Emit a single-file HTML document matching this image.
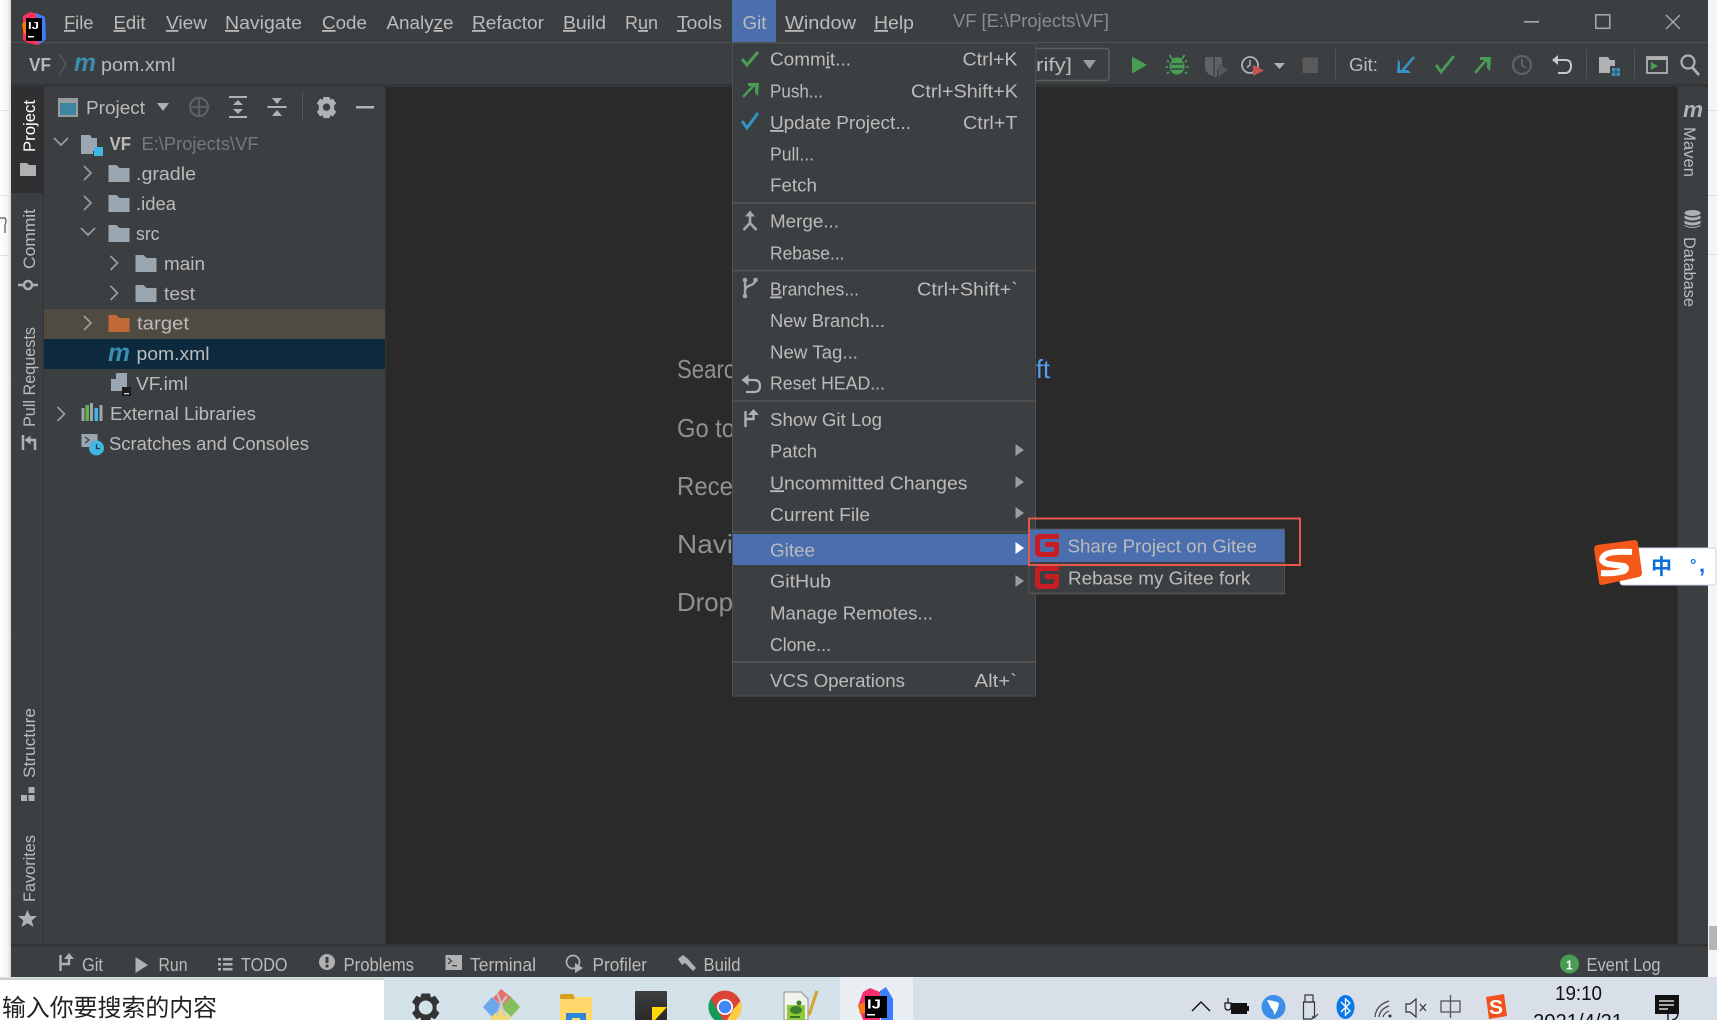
<!DOCTYPE html>
<html><head><meta charset="utf-8"><title>VF</title>
<style>
html,body{margin:0;padding:0;background:#2b2b2b;width:1717px;height:1020px;overflow:hidden}
svg{display:block;font-family:"Liberation Sans","Noto Sans CJK SC",sans-serif}
text{fill:#bbb;font-size:18px}
.m text{font-size:18px}
.r text,text.r{font-size:16.5px}
.g{fill:#afb1b3}
</style></head><body>
<svg width="1717" height="1020" viewBox="0 0 1717 1020" xmlns="http://www.w3.org/2000/svg">
<defs>
<linearGradient id="ls" x1="0" x2="1" y1="0" y2="0"><stop offset="0" stop-color="#fff"/><stop offset=".7" stop-color="#f4f4f4"/><stop offset="1" stop-color="#d8d8d8"/></linearGradient>
<linearGradient id="blk" x1="0" x2="0" y1="0" y2="1"><stop offset="0" stop-color="#3e3e3e"/><stop offset="1" stop-color="#2a2a2a"/></linearGradient>
<path id="fold" d="M0 0h8l3 3h10v14H0z"/>
<path id="chR" d="M0 0l7 7-7 7" fill="none" stroke="#9a9da0" stroke-width="1.7"/>
<path id="chD" d="M0 0l7 7 7-7" fill="none" stroke="#9a9da0" stroke-width="1.7"/>
<path id="gitee" d="M5 0h19v5H7q-2 0-2 2v9q0 2 2 2h10q2 0 2-2v-3h-9V8h14v10q0 5-5 5H5q-5 0-5-5V5q0-5 5-5z"/>
</defs>

<rect width="1717" height="1020" fill="#2a2a2a"/>
<!-- side strips -->
<rect x="0" y="0" width="11" height="980" fill="url(#ls)"/>
<rect x="0" y="110" width="10" height="1" fill="#e0e0e0"/><rect x="0" y="195" width="10" height="1" fill="#e0e0e0"/><rect x="0" y="255" width="10" height="1" fill="#e0e0e0"/>
<path d="M0 218h5q2 3 0 7v8" fill="none" stroke="#555" stroke-width="1.2"/>
<rect x="1708" y="0" width="9" height="980" fill="#f5f5f5"/>
<rect x="1708" y="110" width="9" height="1" fill="#ddd"/><rect x="1708" y="195" width="9" height="1" fill="#ddd"/><rect x="1708" y="254" width="9" height="1" fill="#ddd"/>
<rect x="1709" y="926" width="8" height="24" fill="#b5b5b5"/>

<!-- title bar -->
<rect x="11" y="0" width="1697" height="86" fill="#3c3f41"/>
<rect x="11" y="42" width="1697" height="1" fill="#515151"/>
<rect x="11" y="84" width="1697" height="3" fill="#333537"/>
<!-- IJ logo -->
<path d="M23 16l7-4 8 2 6 3 1 22-8 6-9-2-5-3z" fill="#fe315d"/><path d="M36 13l9 4 1 22-7 6z" fill="#3d7eff"/><path d="M22 24l5-4 3 16-6-2z" fill="#f97a12"/>
<rect x="26" y="18" width="16" height="23" fill="#000"/>
<text x="28" y="29" textLength="11" lengthAdjust="spacingAndGlyphs" style="font-size:10px;font-weight:bold;fill:#fff">IJ</text><rect x="28" y="36" width="6" height="1.5" fill="#fff"/>

<g style="font-size:18.5px">
<text x="64" y="29" textLength="29.5" lengthAdjust="spacingAndGlyphs"><tspan text-decoration="underline">F</tspan>ile</text>
<text x="113.500" y="29" textLength="32" lengthAdjust="spacingAndGlyphs"><tspan text-decoration="underline">E</tspan>dit</text>
<text x="166" y="29" textLength="41" lengthAdjust="spacingAndGlyphs"><tspan text-decoration="underline">V</tspan>iew</text>
<text x="225" y="29" textLength="77" lengthAdjust="spacingAndGlyphs"><tspan text-decoration="underline">N</tspan>avigate</text>
<text x="322" y="29" textLength="45" lengthAdjust="spacingAndGlyphs"><tspan text-decoration="underline">C</tspan>ode</text>
<text x="386.5" y="29" textLength="67" lengthAdjust="spacingAndGlyphs">Analy<tspan text-decoration="underline">z</tspan>e</text>
<text x="472" y="29" textLength="72" lengthAdjust="spacingAndGlyphs"><tspan text-decoration="underline">R</tspan>efactor</text>
<text x="563" y="29" textLength="43" lengthAdjust="spacingAndGlyphs"><tspan text-decoration="underline">B</tspan>uild</text>
<text x="625" y="29" textLength="33" lengthAdjust="spacingAndGlyphs">R<tspan text-decoration="underline">u</tspan>n</text>
<text x="677" y="29" textLength="45" lengthAdjust="spacingAndGlyphs"><tspan text-decoration="underline">T</tspan>ools</text>
<rect x="732" y="0" width="44" height="42" fill="#4b6eaf"/>
<text x="742.5" y="29" textLength="24" lengthAdjust="spacingAndGlyphs">Git</text>
<text x="785" y="29" textLength="71" lengthAdjust="spacingAndGlyphs"><tspan text-decoration="underline">W</tspan>indow</text>
<text x="874" y="29" textLength="40" lengthAdjust="spacingAndGlyphs"><tspan text-decoration="underline">H</tspan>elp</text>
<text x="953" y="27" textLength="156" lengthAdjust="spacingAndGlyphs" style="fill:#8a8c8e">VF [E:\Projects\VF]</text>
</g>
<rect x="1524" y="21" width="15" height="1.6" fill="#aaa"/>
<rect x="1595.8" y="14.8" width="14" height="13.5" fill="none" stroke="#aaa" stroke-width="1.5"/>
<path d="M1666 15l14 14m0-14l-14 14" stroke="#aaa" stroke-width="1.4"/>

<!-- breadcrumb -->
<text x="29" y="71" textLength="22" lengthAdjust="spacingAndGlyphs" style="font-weight:bold;fill:#b5b7b9">VF</text>
<path d="M59 54l7 10-7 11" fill="none" stroke="#5c5f61" stroke-width="1.2"/>
<text x="74" y="71" textLength="22" lengthAdjust="spacingAndGlyphs" style="font-size:25px;font-weight:bold;font-style:italic;fill:#3b8eb0">m</text>
<text x="101" y="71" textLength="74.5" lengthAdjust="spacingAndGlyphs">pom.xml</text>

<!-- toolbar -->
<rect x="1020" y="48.5" width="89" height="32" rx="3" fill="#3c3f41" stroke="#5e6060" stroke-width="1.5"/>
<text x="1036" y="71" textLength="36" lengthAdjust="spacingAndGlyphs">rify]</text>
<path d="M1083 60h13l-6.500 9z" fill="#9a9da0"/>
<path d="M1132 56.500l15 8.500-15 8.500z" fill="#499c54"/>
<g fill="#499c54"><ellipse cx="1177" cy="66.500" rx="7.500" ry="8"/><path d="M1172 59q5-3.500 10 0v2h-10z"/><path d="M1172 59l-2.500-4m12.500 4l2.500-4M1169 62l-2-1.500M1185 62l2-1.500M1168 67h-2.500M1186 67h2.500M1169 72l-2 1.500M1185 72l2 1.500" stroke="#499c54" stroke-width="1.800" fill="none"/></g>
<path d="M1171 64h12m-12 5h12" stroke="#3c3f41" stroke-width="1.600"/>
<path d="M1205 58.500q0-1.500 1.500-1.500h14q1.500 0 1.500 1.500v7l-5 3.500v7l-1.500 1q-10-3-10.500-9z" fill="#606365"/>
<path d="M1214 57v19" stroke="#3c3f41" stroke-width="1.300"/>
<path d="M1218 63l10.500 7-10.500 7z" fill="#55585a"/>
<circle cx="1250" cy="65" r="8" fill="none" stroke="#afb1b3" stroke-width="1.800"/><path d="M1250 60v5l-3 2.500" fill="none" stroke="#afb1b3" stroke-width="1.500"/>
<path d="M1253 65l11 5.500-11 5.500z" fill="#c75450"/>
<path d="M1274 63h11l-5.500 6z" fill="#afb1b3"/>
<rect x="1302.500" y="57.500" width="15.500" height="15.500" fill="#5a5a5a"/>
<rect x="1335" y="49" width="1" height="30" fill="#555"/>
<text x="1349" y="71" textLength="29" lengthAdjust="spacingAndGlyphs">Git:</text>
<path d="M1414 57l-12 14" stroke="#3592c4" stroke-width="2.500"/><path d="M1398 59l-1 14h14l-3-3-8 0v-8z" fill="#3592c4"/>
<path d="M1436 65l5 7 13-16" fill="none" stroke="#499c54" stroke-width="2.800"/>
<path d="M1475 73l12-14" stroke="#499c54" stroke-width="2.500"/><path d="M1480 57h11l-1 14-3-3v-8h-7z" fill="#499c54"/>
<circle cx="1522" cy="65" r="9" fill="none" stroke="#5f6366" stroke-width="2.200"/><path d="M1522 59v6l4 3" fill="none" stroke="#5f6366" stroke-width="2"/>
<path d="M1556 60h10q5 0 5 6t-5 7h-8" fill="none" stroke="#c5c7c9" stroke-width="2"/><path d="M1552 60l6-5v10z" fill="#c5c7c9"/>
<rect x="1586" y="49" width="1" height="30" fill="#555"/>
<path d="M1599 57h9l2 3h5v6h-5v7h-11z" fill="#afb1b3"/><rect x="1612" y="68" width="3.500" height="3.500" fill="#3592c4"/><rect x="1616.500" y="68" width="3.500" height="3.500" fill="#3592c4"/><rect x="1612" y="72.500" width="3.500" height="3.500" fill="#3592c4"/><rect x="1616.500" y="72.500" width="3.500" height="3.500" fill="#3592c4"/>
<rect x="1634" y="49" width="1" height="30" fill="#555"/>
<rect x="1647" y="57" width="20" height="16" fill="none" stroke="#afb1b3" stroke-width="1.800"/><rect x="1647" y="57" width="20" height="3" fill="#afb1b3"/><path d="M1651 62l7 4-7 4z" fill="#499c54"/>
<circle cx="1688" cy="62" r="6.500" fill="none" stroke="#afb1b3" stroke-width="2.200"/><path d="M1692 67l7 8" stroke="#afb1b3" stroke-width="2.800"/>

<!-- left stripe -->
<rect x="11" y="87" width="33" height="859" fill="#3c3f41"/>
<rect x="43" y="87" width="1" height="859" fill="#323232"/>
<rect x="11" y="87" width="32" height="106" fill="#2e3032"/>
<g class="r">
<text transform="translate(35 152) rotate(-90)" textLength="52" lengthAdjust="spacingAndGlyphs" style="fill:#fff">Project</text>
<text transform="translate(35 269) rotate(-90)" textLength="60" lengthAdjust="spacingAndGlyphs">Commit</text>
<text transform="translate(35 427) rotate(-90)" textLength="100" lengthAdjust="spacingAndGlyphs">Pull Requests</text>
<text transform="translate(35 778) rotate(-90)" textLength="70" lengthAdjust="spacingAndGlyphs">Structure</text>
<text transform="translate(35 902) rotate(-90)" textLength="67" lengthAdjust="spacingAndGlyphs">Favorites</text>
</g>
<path d="M20 163h7l2 2h7v11H20z" fill="#afb1b3"/>
<circle cx="28" cy="285" r="4" fill="none" stroke="#afb1b3" stroke-width="2.500"/><path d="M18 285h5m10 0h5" stroke="#afb1b3" stroke-width="2.500"/>
<path d="M23 435v15M35 450v-10h-8" fill="none" stroke="#afb1b3" stroke-width="2.500"/><path d="M24.500 440l6-4.500v9z" fill="#afb1b3"/>
<g fill="#afb1b3"><rect x="28.500" y="787" width="6" height="6"/><rect x="21" y="795" width="6" height="6"/><rect x="28.500" y="795" width="6" height="6"/></g>
<path d="M27.500 910l2.700 6h6.800l-5.300 4.500 1.800 6.500-6-3.700-6 3.700 1.800-6.500-5.300-4.500h6.800z" fill="#afb1b3"/>

<!-- project panel -->
<rect x="44" y="87" width="341" height="859" fill="#3c3f41"/>
<rect x="385" y="87" width="1" height="859" fill="#323232"/>
<rect x="58" y="98" width="20" height="19" fill="#9a9da0"/><rect x="60" y="103" width="16" height="12" fill="#3e86a0"/>
<text x="86" y="114" textLength="59" lengthAdjust="spacingAndGlyphs">Project</text>
<path d="M157 103h12l-6 8z" fill="#afb1b3"/>
<circle cx="199" cy="107" r="9" fill="none" stroke="#5f6366" stroke-width="2"/><path d="M199 97v20M189 107h20" stroke="#5f6366" stroke-width="1.800"/>
<g fill="#afb1b3"><rect x="229" y="96" width="18" height="2"/><rect x="229" y="116" width="18" height="2"/><path d="M238 100l5 5h-10zM238 114l5-5h-10z"/><rect x="267.500" y="106" width="19" height="2"/><path d="M277 104l-5-6h10zM277 110l5 6h-10z"/></g>
<rect x="302" y="92" width="1" height="29" fill="#555"/>
<path fill-rule="evenodd" fill="#afb1b3" d="M323.500 97h6l.8 2.800 2.600-1.200 3.300 4.800-2 2v4.300l2 2-3.300 4.800-2.600-1.200-.8 2.800h-6l-.8-2.800-2.600 1.200-3.300-4.800 2-2v-4.300l-2-2 3.300-4.800 2.600 1.200zM326.500 103.500a3.700 3.700 0 1 0 .01 0z"/>
<rect x="356" y="106" width="18" height="2.500" fill="#afb1b3"/>

<!-- tree -->
<use href="#chD" x="54" y="138"/>
<path d="M81 135h9l2 3h5v13h-4v3H81z" fill="#9aa7b0"/><rect x="94" y="147" width="9" height="9" fill="#3fb6e6"/>
<text x="109.500" y="150" textLength="21.500" lengthAdjust="spacingAndGlyphs" style="font-weight:bold">VF</text>
<text x="141.500" y="150" textLength="117" lengthAdjust="spacingAndGlyphs" style="fill:#787878">E:\Projects\VF</text>

<use href="#chR" x="84" y="166"/><use href="#fold" x="108.500" y="165" fill="#9aa7b0"/>
<text x="136" y="180" textLength="60" lengthAdjust="spacingAndGlyphs">.gradle</text>
<use href="#chR" x="84" y="196"/><use href="#fold" x="108.500" y="195" fill="#9aa7b0"/>
<text x="136" y="210" textLength="40" lengthAdjust="spacingAndGlyphs">.idea</text>
<use href="#chD" x="81" y="228"/><use href="#fold" x="108.500" y="225" fill="#9aa7b0"/>
<text x="136" y="240" textLength="23.500" lengthAdjust="spacingAndGlyphs">src</text>
<use href="#chR" x="110.500" y="256"/><use href="#fold" x="135.500" y="255" fill="#9aa7b0"/>
<text x="164" y="270" textLength="41" lengthAdjust="spacingAndGlyphs">main</text>
<use href="#chR" x="110.500" y="286"/><use href="#fold" x="135.500" y="285" fill="#9aa7b0"/>
<text x="164" y="300" textLength="31" lengthAdjust="spacingAndGlyphs">test</text>

<rect x="44" y="309" width="341" height="30" fill="#4f4b41"/>
<rect x="44" y="339" width="341" height="30" fill="#0d293e"/>
<use href="#chR" x="84" y="316"/><use href="#fold" x="108.500" y="315" fill="#c2693a"/>
<text x="137" y="329.500" textLength="52" lengthAdjust="spacingAndGlyphs">target</text>
<text x="108" y="361" textLength="22" lengthAdjust="spacingAndGlyphs" style="font-size:25px;font-weight:bold;font-style:italic;fill:#3b8eb0">m</text>
<text x="136.500" y="360" textLength="73" lengthAdjust="spacingAndGlyphs">pom.xml</text>
<path d="M117 373h10v18h-16v-12z" fill="#9aa7b0"/><path d="M116 374v5h-5z" fill="#3c3f41"/><rect x="122" y="387" width="9" height="9" fill="#1c1c1c"/><rect x="124" y="393" width="5" height="1.300" fill="#ddd"/>
<text x="136" y="390" textLength="52" lengthAdjust="spacingAndGlyphs">VF.iml</text>
<use href="#chR" x="57.500" y="407"/>
<rect x="81.500" y="408" width="3" height="13" fill="#9aa7b0"/><rect x="85.500" y="405" width="3.500" height="16" fill="#62b543"/><rect x="90" y="403" width="3" height="18" fill="#9aa7b0"/><rect x="94.500" y="408" width="3.500" height="13" fill="#40b6e0"/><rect x="99.500" y="405" width="3" height="16" fill="#9aa7b0"/>
<text x="110" y="420" textLength="146" lengthAdjust="spacingAndGlyphs">External Libraries</text>
<rect x="81.500" y="434" width="16" height="13" fill="#9aa7b0"/><path d="M85 437l4 3-4 3" fill="none" stroke="#3c3f41" stroke-width="1.300"/>
<circle cx="96.500" cy="448" r="7.500" fill="#40b6e0"/><path d="M96.500 444v4.500h3.500" fill="none" stroke="#2a3d48" stroke-width="1.300"/>
<text x="109" y="450" textLength="200" lengthAdjust="spacingAndGlyphs">Scratches and Consoles</text>

<!-- editor hints -->
<text x="677" y="378" textLength="58" lengthAdjust="spacingAndGlyphs" style="fill:#909090;font-size:26px">Searc</text>
<text x="677" y="437" textLength="58" lengthAdjust="spacingAndGlyphs" style="fill:#909090;font-size:26px">Go to</text>
<text x="677" y="495" textLength="56" lengthAdjust="spacingAndGlyphs" style="fill:#909090;font-size:26px">Rece</text>
<text x="677" y="553" textLength="56" lengthAdjust="spacingAndGlyphs" style="fill:#909090;font-size:26px">Navi</text>
<text x="677" y="611" textLength="56" lengthAdjust="spacingAndGlyphs" style="fill:#909090;font-size:26px">Drop</text>
<text x="1036" y="378" textLength="14" lengthAdjust="spacingAndGlyphs" style="fill:#589df6;font-size:26px">ft</text>

<!-- right stripe -->
<rect x="1677" y="87" width="31" height="859" fill="#3c3f41"/><rect x="1677" y="87" width="1" height="859" fill="#323232"/>
<text x="1683" y="117" textLength="20" lengthAdjust="spacingAndGlyphs" style="font-size:22px;font-weight:bold;font-style:italic;fill:#afb1b3">m</text>
<g class="r">
<text transform="translate(1684 127) rotate(90)" textLength="50" lengthAdjust="spacingAndGlyphs">Maven</text>
<text transform="translate(1684 237) rotate(90)" textLength="70" lengthAdjust="spacingAndGlyphs">Database</text>
</g>
<g fill="#afb1b3"><ellipse cx="1692.500" cy="213" rx="8" ry="3"/><path d="M1684.500 215.500q8 4 16 0v3q-8 4-16 0zM1684.500 220.500q8 4 16 0v3q-8 4-16 0zM1684.500 225q8 4 16 0v1q-8 4-16 0z"/></g>

<!-- bottom tool bar -->
<rect x="11" y="944" width="1697" height="3" fill="#323436"/>
<rect x="11" y="947" width="1697" height="31" fill="#3c3f41"/>
<g style="fill:#aaa">
<path d="M60.500 955v16M60.500 964h8.500v-5" fill="none" stroke="#afb1b3" stroke-width="2.400"/><path d="M69 953l5 6h-10z" fill="#afb1b3"/>
<text x="82" y="971" textLength="21" lengthAdjust="spacingAndGlyphs">Git</text>
<path d="M135.500 957l12.500 8-12.500 8z" fill="#afb1b3"/>
<text x="158.500" y="971" textLength="29" lengthAdjust="spacingAndGlyphs">Run</text>
<path d="M218 958h3v2.500h-3zm5 0h9.500v2.500H223zm-5 5h3v2.500h-3zm5 0h9.500v2.500H223zm-5 5h3v2.500h-3zm5 0h9.500v2.500H223z" fill="#afb1b3"/>
<text x="241" y="971" textLength="46.500" lengthAdjust="spacingAndGlyphs">TODO</text>
<circle cx="327" cy="962" r="8" fill="#afb1b3"/><rect x="325.500" y="957" width="3" height="6" fill="#3c3f41"/><rect x="325.500" y="964.500" width="3" height="3" fill="#3c3f41"/>
<text x="343.500" y="971" textLength="70.500" lengthAdjust="spacingAndGlyphs">Problems</text>
<rect x="445.500" y="955" width="16.500" height="15" fill="#afb1b3"/><path d="M448 958l3.500 3-3.500 3" fill="none" stroke="#3c3f41" stroke-width="1.300"/><rect x="452" y="965" width="5" height="1.300" fill="#3c3f41"/>
<text x="470" y="971" textLength="66" lengthAdjust="spacingAndGlyphs">Terminal</text>
<circle cx="573" cy="962" r="6.500" fill="none" stroke="#afb1b3" stroke-width="1.700"/><path d="M575 963l8 5-8 5z" fill="#afb1b3"/>
<text x="592.500" y="971" textLength="54.500" lengthAdjust="spacingAndGlyphs">Profiler</text>
<path d="M678 959l5-4 5 4 8 9-3 3-8-8-3 2z" fill="#afb1b3"/>
<text x="703.500" y="971" textLength="37" lengthAdjust="spacingAndGlyphs">Build</text>
<circle cx="1569.500" cy="964" r="9.500" fill="#499c54"/>
<text x="1566" y="969.500" textLength="6.500" lengthAdjust="spacingAndGlyphs" style="font-size:13px;font-weight:bold;fill:#fff">1</text>
<text x="1586.500" y="971" textLength="74" lengthAdjust="spacingAndGlyphs">Event Log</text>
</g>

<!-- taskbar -->
<rect x="0" y="977" width="840" height="43" fill="#d3e1e9"/>
<rect x="840" y="977" width="73" height="43" fill="#e9eef3"/>
<rect x="913" y="977" width="804" height="43" fill="#d8dfe9"/>
<rect x="0" y="978" width="384" height="42" fill="#fff"/><rect x="0" y="978" width="384" height="2" fill="#ccc"/>
<text x="2" y="1016" textLength="215" lengthAdjust="spacingAndGlyphs" style="font-size:24px;fill:#222">输入你要搜索的内容</text>
<!-- gear -->
<path fill-rule="evenodd" fill="#333" d="M421.500 993.500h8.500l1 4 4-1.800 4.500 6.300-3 3v5l3 3-4.500 6.300-4-1.800-1 4h-8.500l-1-4-4 1.800-4.500-6.300 3-3v-5l-3-3 4.500-6.300 4 1.800zM425.700 1000.500a7 7 0 1 0 .01 0z"/>
<!-- git extensions -->
<path d="M501 989l11 9-9 9-10-9z" fill="#e8716c"/><path d="M492 997l10 10-10 10-9-10z" fill="#6ea6ee"/><path d="M511 997l9 10-9 10-10-10z" fill="#84bf5c"/><path d="M500 1009l11 9-3 2h-15l-3-2z" fill="#f2da6e"/>
<path d="M497 993l4 10 4 14M507 996l-6 8-4 12" fill="none" stroke="#c9ccd0" stroke-width="2"/>
<!-- folder -->
<path d="M560 996q0-2 2-2h11l2 3h17v23h-32z" fill="#ffd76b"/><path d="M560 999v-3q0-2 2-2h11l2 5z" fill="#d89e1f"/><path fill-rule="evenodd" d="M566 1013h20v7h-6v-2h-8v2h-6z" fill="#2f86d6"/>
<!-- black -->
<rect x="635" y="991" width="32" height="29" rx="1" fill="url(#blk)"/><path d="M652 1007h15l-12 13h-3z" fill="#ffd80a"/>
<!-- chrome -->
<circle cx="725" cy="1007" r="16.500" fill="#db4437"/><path d="M725 1023.500a16.500 16.500 0 0 1-14.300-24.700l8 14z" fill="#0f9d58"/><path d="M725 1023.500l8-13.700 7.500-8.800a16.500 16.500 0 0 1-15.500 22.500z" fill="#ffcd40"/><circle cx="725" cy="1007" r="8" fill="#fff"/><circle cx="725" cy="1007" r="6.300" fill="#4285f4"/>
<!-- notepad++ -->
<path d="M784 992h17l7 7v21h-24z" fill="#f2f2ec" stroke="#8f8f8f"/>
<rect x="787" y="1005" width="18" height="15" fill="#8ecb3c"/>
<ellipse cx="796" cy="1010" rx="6" ry="4" fill="#3b7f2f"/><circle cx="799" cy="1003" r="2.500" fill="#3b7f2f"/><path d="M790 1017h10" stroke="#274f1e" stroke-width="1.500"/>
<path d="M817 991l-8 24" stroke="#d7a030" stroke-width="3"/>
<!-- intellij -->
<path d="M858 1006l5-14 7-4 10 4v28h-17z" fill="#f5316e"/><path d="M880 991l6-4 7 12v21h-12z" fill="#3d7eff"/><path d="M858 1005l7-3v11l-5 1z" fill="#f97a12"/>
<rect x="865" y="996" width="22" height="22" fill="#000"/>
<text x="867" y="1008.500" textLength="14" lengthAdjust="spacingAndGlyphs" style="font-size:12.500px;font-weight:bold;fill:#fff">IJ</text><rect x="867" y="1014" width="8" height="1.500" fill="#fff"/>

<!-- tray -->
<path d="M1192 1011l9-9 9 9" fill="none" stroke="#111" stroke-width="1.400"/>
<rect x="1231" y="1003" width="16" height="11" fill="#111"/><rect x="1247" y="1006" width="2" height="5" fill="#111"/><path d="M1228 998v5m-3 0h6v4q0 3-3 3t-3-3z" fill="none" stroke="#111" stroke-width="1.200"/>
<circle cx="1273.500" cy="1007" r="12" fill="#3d8ee8"/><path d="M1267 1000q8 1 12 3-1 8-5 12 0-5-3-7z" fill="#fff"/>
<path d="M1303.500 1002h11v15l-3 2h-8z" fill="none" stroke="#333" stroke-width="1.200"/><rect x="1305" y="995" width="8" height="7" fill="none" stroke="#333" stroke-width="1.200"/><path d="M1312 1016l2 2 4-4" fill="none" stroke="#333"/>
<ellipse cx="1345.500" cy="1007" rx="9" ry="12" fill="#0a78e8"/><path d="M1341 1002l9 9-4.500 4v-16l4.500 4-9 9" fill="none" stroke="#fff" stroke-width="1.300"/>
<path d="M1375 1017q1-12 14-16M1379 1017q1-8 10-11M1383 1017q1-4 6-6" fill="none" stroke="#444" stroke-width="1.200"/><circle cx="1390" cy="1016" r="1.500" fill="#333"/>
<path d="M1406 1004h4l6-5v18l-6-5h-4z" fill="none" stroke="#333" stroke-width="1.200"/><path d="M1420 1004l6 7m0-7l-6 7" stroke="#333" stroke-width="1.200"/>
<rect x="1441" y="1001" width="19" height="11" fill="none" stroke="#555" stroke-width="1.300"/><path d="M1450.500 995v23" stroke="#555" stroke-width="1.300"/>
<path d="M1486 997l18-3 3 22-18 3z" fill="#f0511c"/><text x="1489" y="1014" textLength="14" lengthAdjust="spacingAndGlyphs" style="font-size:20px;font-weight:bold;fill:#fff">S</text>
<text x="1555" y="1000" textLength="47" lengthAdjust="spacingAndGlyphs" style="font-size:20px;fill:#111">19:10</text>
<text x="1533" y="1028" textLength="90" lengthAdjust="spacingAndGlyphs" style="font-size:20px;fill:#111">2021/4/21</text>
<rect x="1655" y="995" width="24" height="19" fill="#111"/><path d="M1659 1001h15M1659 1005h15M1659 1009h9" stroke="#fff" stroke-width="1.200"/><path d="M1668 1014v6M1678 1013q0 6-6 7" fill="none" stroke="#222" stroke-width="1.500"/>

<!-- git menu -->
<rect x="732.500" y="43" width="303" height="653" fill="#3c3f41" stroke="#515151"/>
<g fill="#515151">
<rect x="733" y="202" width="302" height="2"/><rect x="733" y="269.500" width="302" height="2"/><rect x="733" y="400" width="302" height="2"/><rect x="733" y="531" width="302" height="1.500"/><rect x="733" y="661" width="302" height="2"/>
</g>
<rect x="733" y="534" width="302" height="31" fill="#4b6eaf"/>
<g class="m">
<text x="770" y="65.500" textLength="81" lengthAdjust="spacingAndGlyphs">Comm<tspan text-decoration="underline">i</tspan>t...</text>
<text x="770" y="97.500" textLength="53" lengthAdjust="spacingAndGlyphs">Push...</text>
<text x="770" y="129" textLength="141" lengthAdjust="spacingAndGlyphs"><tspan text-decoration="underline">U</tspan>pdate Project...</text>
<text x="770" y="160.500" textLength="44" lengthAdjust="spacingAndGlyphs">Pull...</text>
<text x="770" y="191.500" textLength="47" lengthAdjust="spacingAndGlyphs">Fetch</text>
<text x="770" y="227.500" textLength="69" lengthAdjust="spacingAndGlyphs">Merge...</text>
<text x="770" y="259.500" textLength="74.500" lengthAdjust="spacingAndGlyphs">Rebase...</text>
<text x="770" y="295.500" textLength="89" lengthAdjust="spacingAndGlyphs"><tspan text-decoration="underline">B</tspan>ranches...</text>
<text x="770" y="327" textLength="115" lengthAdjust="spacingAndGlyphs">New Branch...</text>
<text x="770" y="358.300" textLength="88" lengthAdjust="spacingAndGlyphs">New Tag...</text>
<text x="770" y="389.300" textLength="115" lengthAdjust="spacingAndGlyphs">Reset HEAD...</text>
<text x="770" y="426" textLength="112" lengthAdjust="spacingAndGlyphs">Show Git Log</text>
<text x="770" y="457.300" textLength="47" lengthAdjust="spacingAndGlyphs">Patch</text>
<text x="770" y="489.300" textLength="197.500" lengthAdjust="spacingAndGlyphs"><tspan text-decoration="underline">U</tspan>ncommitted Changes</text>
<text x="770" y="521" textLength="100" lengthAdjust="spacingAndGlyphs">Current File</text>
<text x="770" y="556.700" textLength="45" lengthAdjust="spacingAndGlyphs">Gitee</text>
<text x="770" y="587.300" textLength="61" lengthAdjust="spacingAndGlyphs">GitHub</text>
<text x="770" y="619.700" textLength="163" lengthAdjust="spacingAndGlyphs">Manage Remotes...</text>
<text x="770" y="651" textLength="61" lengthAdjust="spacingAndGlyphs">Clone...</text>
<text x="770" y="687" textLength="135" lengthAdjust="spacingAndGlyphs">VCS Operations</text>
<text x="962.500" y="65.500" textLength="55" lengthAdjust="spacingAndGlyphs">Ctrl+K</text>
<text x="911" y="97.500" textLength="107" lengthAdjust="spacingAndGlyphs">Ctrl+Shift+K</text>
<text x="963" y="129" textLength="54.500" lengthAdjust="spacingAndGlyphs">Ctrl+T</text>
<text x="917" y="295.500" textLength="101" lengthAdjust="spacingAndGlyphs">Ctrl+Shift+`</text>
<text x="974.500" y="687" textLength="42.500" lengthAdjust="spacingAndGlyphs">Alt+`</text>
</g>
<!-- menu icons -->
<path d="M742 59l5 6 11-13" fill="none" stroke="#499c54" stroke-width="3"/>
<path d="M743 97l12-13" stroke="#499c54" stroke-width="2.500"/><path d="M748 83h11l-1 13-3-3v-7h-7z" fill="#499c54"/>
<path d="M742 121l5 7 11-15" fill="none" stroke="#3592c4" stroke-width="3"/>
<path d="M750 215v8M750 223l-6.500 7M750 223l6.500 7" fill="none" stroke="#a6a8aa" stroke-width="2.600"/><path d="M750 210.500l-5 6h10z" fill="#a6a8aa"/>
<path d="M745 280v16M745 291q0-4 5-5.500t5.500-6" fill="none" stroke="#a6a8aa" stroke-width="2.400"/><circle cx="745" cy="280" r="2.300" fill="#a6a8aa"/><circle cx="755.500" cy="280" r="2.300" fill="#a6a8aa"/><circle cx="745" cy="296" r="2.300" fill="#a6a8aa"/>
<path d="M746 380h8q6 0 6 6t-6 6h-8" fill="none" stroke="#afb1b3" stroke-width="2.200"/><path d="M741.500 380l7-5.500v11z" fill="#afb1b3"/>
<path d="M745.500 411v16M745.500 419h8v-4" fill="none" stroke="#afb1b3" stroke-width="2.400"/><path d="M753.500 409l5.500 6h-11z" fill="#afb1b3"/>
<g fill="#9a9da0"><path d="M1015.500 444l8.500 6-8.500 6zM1015.500 476l8.500 6-8.500 6zM1015.500 507l8.500 6-8.500 6zM1015.500 575l8.500 6-8.500 6z"/></g>
<path d="M1015.500 542l8.500 6-8.500 6z" fill="#fff"/>

<!-- submenu -->
<rect x="1029" y="529" width="255.500" height="65" fill="#3c3f41" stroke="#515151"/>
<rect x="1029.500" y="529.500" width="255" height="32.500" fill="#4b6eaf"/>
<rect x="1029" y="592.500" width="255.500" height="2" fill="#515151"/>
<use href="#gitee" x="1035" y="534" fill="#c71d23"/>
<use href="#gitee" x="1035" y="566" fill="#c71d23"/>
<text x="1067.500" y="552.500" textLength="189.500" lengthAdjust="spacingAndGlyphs">Share Project on Gitee</text>
<text x="1068" y="584.700" textLength="182.500" lengthAdjust="spacingAndGlyphs">Rebase my Gitee fork</text>
<rect x="1029" y="518.500" width="271" height="46.500" fill="none" stroke="#e8574c" stroke-width="2"/>

<!-- sogou IME -->
<rect x="1620" y="548" width="96" height="37" rx="3" fill="#fff" stroke="#c8d7e8"/>
<path d="M1597 545l38-5q2 0 3 3l4 30q0 3-3 4l-37 8q-3 0-3-3l-5-33q0-3 3-4z" fill="#f4571a"/>
<path d="M1632 552q-22-1-27 3-7 6 3 9l16 2q4 2 0 5-10 3-23 2" fill="none" stroke="#fff" stroke-width="6"/>
<text x="1651" y="574" textLength="21" lengthAdjust="spacingAndGlyphs" style="font-size:21px;font-weight:bold;fill:#0a6fd8">中</text>
<text x="1690" y="570" style="font-size:16px;font-weight:bold;fill:#0a6fd8">°</text>
<text x="1699" y="572" style="font-size:22px;font-weight:bold;fill:#0a6fd8">,</text>
</svg>
</body></html>
